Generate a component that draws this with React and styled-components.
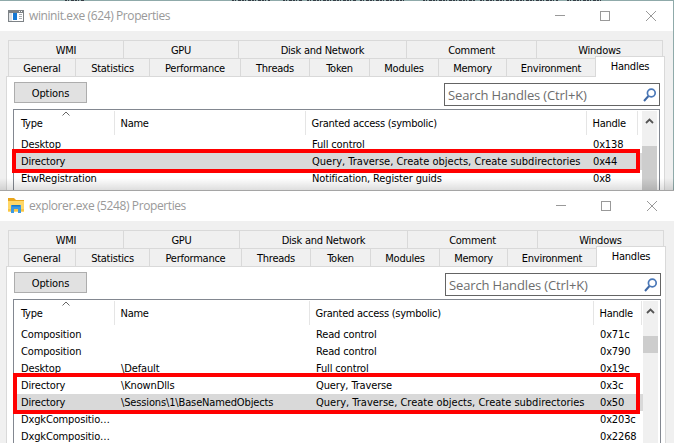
import React from 'react';
import styled, { createGlobalStyle } from 'styled-components';

const Global = createGlobalStyle`
  * { box-sizing: border-box; }
  body { margin: 0; background: #fff; overflow: hidden; }
`;
const Desktop = styled.div`
  width: 674px; height: 443px; overflow: hidden; background: #8faaaa;
  display: flex; flex-direction: column;
  font: 11px/17px "DejaVu Sans Condensed", "DejaVu Sans", sans-serif; font-stretch: condensed;
  letter-spacing: -0.25px; color: #000;
`;
const Backdrop = styled.svg`display: block; width: 674px; height: 1px; flex: none;`;
const Window = styled.section`
  display: flex; flex-direction: column; flex: none;
  height: ${p => p.$height}px; width: ${p => p.$width}px; background: #f0f0f0; overflow: hidden;
  border-top: ${p => p.$edge ? '1px solid #a5a5a5' : '0'};
`;
const Slot = styled.div`position: relative; flex: none;`;
const Shade = styled.div`
  position: absolute; left: 0; right: 0; bottom: 0; height: 12px;
  background: linear-gradient(rgba(0,0,0,0), rgba(0,0,0,.13));
`;
const TitleBar = styled.header`
  height: 30px; flex: none; background: #fff; display: flex; align-items: center; padding-left: 8px;
`;
const Title = styled.span`
  flex: 1; margin-left: 5px; font: 12px/16px "Open Sans", sans-serif; letter-spacing: -0.4px; color: #999;
`;
const Controls = styled.svg`width: 112px; height: 16px; margin-right: ${p => p.$right}px;`;
const TabRow = styled.div`
  display: flex; flex: none; height: 18px; margin-left: 8px; margin-top: ${p => p.$gap || 0}px;
`;
const Tab = styled.div`
  width: ${p => p.$w}px; flex: none; height: 18px; border-top: 1px solid #d9d9d9; border-left: 1px solid #d9d9d9;
  border-right: ${p => p.$last ? '1px solid #d9d9d9' : '0'}; text-align: center; line-height: 19px;
`;
const ActiveTab = styled.div`
  width: ${p => p.$w}px; height: 21px; margin-top: -2px; background: #fff; border: 1px solid #d9d9d9; border-bottom: 0;
  flex: none; z-index: 1; line-height: 19px; text-align: center;
`;
const Page = styled.main`
  margin-left: 6px; width: ${p => p.$w}px; flex: 1; min-height: 0; background: #fff; border: 1px solid #d9d9d9;
  border-bottom: 0; padding: 5px 4px 0 6px; display: flex; flex-direction: column;
`;
const Toolbar = styled.div`
  display: flex; justify-content: space-between; align-items: flex-start; height: 27px; flex: none; padding-left: 1px;
`;
const Button = styled.button`
  width: 73px; height: 21px; border: 1px solid #adadad; background: #e1e1e1; padding: 2px 0 0; color: #000;
  font: inherit; letter-spacing: -0.1px; line-height: 17px;
`;
const Search = styled.div`
  width: 216px; height: 23px; margin-top: 1px; border: 1px solid #646464; display: flex; align-items: center;
  padding: 0 2px 0 3px; color: #6d6d6d; font: 13px/20px "Open Sans", sans-serif; letter-spacing: -0.14px;
  justify-content: space-between; white-space: nowrap;
`;
const List = styled.div`
  position: relative; flex: 1; min-height: 0; border: 1px solid #828790; border-bottom: 0; padding: 1px 2px 0 0; display: flex;
`;
const Table = styled.div`flex: 1; min-width: 0;`;
const Header = styled.div`display: grid; grid-template-columns: ${p => p.$cols}; height: 24px; position: relative;`;
const HeadCell = styled.div`
  height: 24px; padding-left: ${p => p.$first ? 7 : 5.5}px; line-height: 25px; border-right: 1px solid #e5e5e5; white-space: nowrap;
`;
const SortMark = styled.svg`position: absolute; left: 48px; top: 0; width: 8px; height: 5px;`;
const Rows = styled.div`padding-top: ${p => p.$gap}px;`;
const Row = styled.div`
  display: grid; grid-template-columns: ${p => p.$cols}; height: 17px;
  background: ${p => p.$selected ? '#d9d9d9' : 'transparent'};
`;
const Cell = styled.div`
  padding-left: ${p => p.$first ? 7 : 6}px; line-height: 17px; white-space: nowrap;
  letter-spacing: ${p => p.$wide ? '0' : '-0.14px'};
`;
const Scrollbar = styled.div`width: 15px; background: #f0f0f0; display: flex; flex-direction: column; align-items: center;`;
const Arrow = styled.svg`width: 9px; height: 6px; margin-top: 7px; flex: none;`;
const Thumb = styled.div`width: 100%; margin-top: ${p => p.$top}px; height: ${p => p.$h}px; flex: none; background: #cdcdcd;`;
const Highlight = styled.div`
  position: absolute; left: ${p => p.$left}px; top: ${p => p.$top}px; width: ${p => p.$w}px; height: ${p => p.$h}px;
  border: 4px solid #f00;
`;

const AppIcon = () => (
  <svg width="16" height="16" viewBox="0 0 16 16" shapeRendering="crispEdges">
    <path fill="#7d8286" d="M0 2h16v12H0z" />
    <path fill="#fff" d="M1 5h14v8H1z" />
    <path fill="#dfe3e6" d="M1 5h3v8H1z" />
    <path fill="#1478d4" d="M5 5h4v7H5z" />
    <path fill="#a9aeb3" d="M11 6h3v1h-3zM11 8h3v1h-3zM11 10h3v1h-3z" />
    <path fill="#fff" d="M11 3h1v1h-1zM13 3h1v1h-1z" />
  </svg>
);
const FolderIcon = () => (
  <svg width="16" height="16" viewBox="0 1 16 16">
    <path fill="#e9a51b" d="M0 1h6l2 2h8v4H0z" />
    <path fill="#ffd767" d="M0 4h16v10.500H0z" />
    <path fill="#fbc642" d="M0 12h16v2.500H0z" />
    <path fill="#3c99e3" d="M3 8h10v8h-3v-4H6v4H3z" />
    <path fill="#1678c7" d="M4 8h8v1.500H4z" />
  </svg>
);
const Magnifier = () => (
  <svg width="14" height="14" viewBox="0 0 14 14" fill="none">
    <path d="M1 13l4.500-5" stroke="#3f68a5" strokeWidth="2" />
    <circle cx="8.300" cy="5" r="3.900" stroke="#4a78b8" strokeWidth="1.700" />
  </svg>
);

function PropertiesWindow({ data }) {
  const { icon, title, row1, row2, active, cols, rows } = data;
  return (
    <Window $height={data.height} $width={data.width} $edge={data.edge}>
      <TitleBar>
        {icon}
        <Title>{title}</Title>
        <Controls $right={data.controlsRight} viewBox="0 0 112 16" fill="none" stroke="#999" strokeWidth="1">
          <path d="M4 7.500h10M49.500 3.500h9v9h-9z" shapeRendering="crispEdges" />
          <path d="M95 3l10 10M105 3L95 13" />
        </Controls>
      </TitleBar>
      <TabRow $gap={9}>
        {row1.map(([t, w], i) => <Tab key={t} $w={w} $last={i === 4}>{t}</Tab>)}
      </TabRow>
      <TabRow>
        {row2.map(([t, w]) => <Tab key={t} $w={w}>{t}</Tab>)}
        <ActiveTab $w={active}>Handles</ActiveTab>
      </TabRow>
      <Page $w={data.pageW}>
        <Toolbar>
          <Button>Options</Button>
          <Search><span>Search Handles (Ctrl+K)</span><Magnifier /></Search>
        </Toolbar>
        <List>
          <Table>
            <Header $cols={cols}>
              {['Type', 'Name', 'Granted access (symbolic)', 'Handle'].map((t, i) => <HeadCell key={t} $first={i === 0}>{t}</HeadCell>)}
              <SortMark viewBox="0 0 8 5" fill="none" stroke="#666"><path d="M.5 4.500L4 1l3.500 3.500" /></SortMark>
            </Header>
            <Rows $gap={data.gap}>
              {rows.map((r, i) => (
                <Row key={i} $cols={cols} $selected={i === data.selected}>
                  {r.map((t, j) => <Cell key={j} $first={j === 0} $wide={t.length > 40}>{t}</Cell>)}
                </Row>
              ))}
            </Rows>
          </Table>
          <Scrollbar>
            <Arrow viewBox="0 0 9 6" fill="none" stroke="#555" strokeWidth="1.800"><path d="M1 5l3.500-3.500L8 5" /></Arrow>
            <Thumb $top={data.thumbTop} $h={data.thumbH} />
          </Scrollbar>
          <Highlight {...data.mark} />
        </List>
      </Page>
    </Window>
  );
}

const wininit = {
  icon: <AppIcon />, title: 'wininit.exe (624) Properties', height: 189, width: 673, controlsRight: 10, pageW: 659,
  row1: [['WMI', 115], ['GPU', 115], ['Disk and Network', 168], ['Comment', 130], ['Windows', 127]],
  row2: [['General', 67], ['Statistics', 74], ['Performance', 91], ['Threads', 69], ['Token', 60], ['Modules', 69], ['Memory', 68], ['Environment', 89]],
  active: 70, cols: '101px 191px 281px 51px', gap: 1, selected: 1, thumbTop: 22, thumbH: 60,
  rows: [
    ['Desktop', '', 'Full control', '0x138'],
    ['Directory', '', 'Query, Traverse, Create objects, Create subdirectories', '0x44'],
    ['EtwRegistration', '', 'Notification, Register guids', '0x8'],
    ['', '', 'Notification, Register guids', ''],
  ],
  mark: { $left: -2, $top: 39, $w: 628, $h: 24 },
};
const explorer = {
  icon: <FolderIcon />, title: 'explorer.exe (5248) Properties', height: 253, width: 674, edge: true, controlsRight: 10, pageW: 660,
  row1: [['WMI', 115], ['GPU', 116], ['Disk and Network', 168], ['Comment', 130], ['Windows', 127]],
  row2: [['General', 67], ['Statistics', 74], ['Performance', 92], ['Threads', 69], ['Token', 60], ['Modules', 69], ['Memory', 68], ['Environment', 89]],
  active: 70, cols: '101px 195px 284px 48px', gap: 1, selected: 4, thumbTop: 22, thumbH: 17,
  rows: [
    ['Composition', '', 'Read control', '0x71c'],
    ['Composition', '', 'Read control', '0x790'],
    ['Desktop', '\\Default', 'Full control', '0x19c'],
    ['Directory', '\\KnownDlls', 'Query, Traverse', '0x3c'],
    ['Directory', '\\Sessions\\1\\BaseNamedObjects', 'Query, Traverse, Create objects, Create subdirectories', '0x50'],
    ['DxgkCompositio…', '', '', '0x203c'],
    ['DxgkCompositio…', '', '', '0x2268'],
  ],
  mark: { $left: -1, $top: 73, $w: 627, $h: 41 },
};

export default function App() {
  return (
    <>
      <Global />
      <Desktop>
        <Backdrop viewBox="0 0 674 1" stroke="#343c44" strokeDasharray="2 1 1 2 3 1">
          <path d="M65 .5h20M232 .5h38M283 .5h20M307 .5h49M360 .5h44M423 .5h52M480 .5h78M567 .5h36" />
        </Backdrop>
        <Slot><PropertiesWindow data={wininit} /><Shade /></Slot>
        <PropertiesWindow data={explorer} />
      </Desktop>
    </>
  );
}
